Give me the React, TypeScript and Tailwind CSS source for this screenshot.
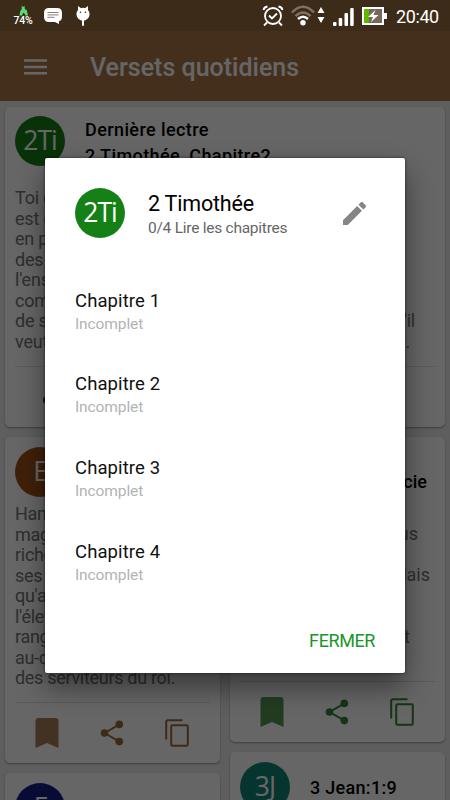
import type { ReactNode } from "react";

interface CardActionsProps {
  bookmark: string;
  share: string;
}

const chapters = ["Chapitre 1", "Chapitre 2", "Chapitre 3", "Chapitre 4"];

const timothyLines = [
  ["Toi donc, mon enfant, fortifie-toi dans la", ""],
  ["est en Jésus-Christ. Et ce que tu as", ""],
  ["en présence de beaucoup de témoins,", ""],
  ["des hommes fidèles, capables de", ""],
  ["l'enseigner aussi à d'autres. Souffre", ""],
  ["comme un bon soldat de Jésus-Christ.", ""],
  ["de soldat qui s'embarrasse des", "s'il"],
  ["veut plaire à celui qui l'a", "enrôlé."],
];

const estherLines = [
  "Haman leur parla de la",
  "magnificence de ses",
  "richesses, du nombre",
  "ses fils, de tout ce",
  "qu'avait fait le roi pour",
  "l'élever en lui donnant",
  "rang",
  "au-dessus des chefs et",
  "des serviteurs du roi.",
];

function Avatar({ label, color }: { label: string; color: string }) {
  return (
    <div
      className={`flex size-[50px] shrink-0 items-center justify-center rounded-full pb-[2px] font-['Open_Sans'] text-[26.5px] leading-none tracking-[-1px] text-white ${color}`}
    >
      {label}
    </div>
  );
}

function ShareIcon({ className }: { className?: string }) {
  return (
    <svg viewBox="0 0 24 26" className={`h-[26px] w-6 ${className ?? ""}`} fill="currentColor">
      <path d="M4.5 13 19.5 4.3M4.5 13l15 8.7" stroke="currentColor" strokeWidth="2" />
      <circle cx="4.5" cy="13" r="3.8" />
      <circle cx="19.3" cy="4.4" r="3.8" />
      <circle cx="19.3" cy="21.6" r="3.8" />
    </svg>
  );
}

function CardActions({ bookmark, share }: CardActionsProps) {
  return (
    <div className="mx-[10px] flex h-[61px] items-start border-t border-[#e2e2e2] pt-[15px]">
      <svg viewBox="0 0 24 30" className={`ml-5 h-[30px] w-6 ${bookmark}`} fill="currentColor">
        <path d="M3.500 0h17q3 0 3 3v27l-11.500-5-11.500 5V3q0-3 3-3z" />
      </svg>
      <ShareIcon className={`mt-[2px] ml-[41px] ${share}`} />
      <svg viewBox="0 0 24 28" className={`mt-[1px] ml-[41px] h-7 w-6 ${share}`} fill="none" stroke="currentColor" strokeWidth="2">
        <path d="M17.5 1.3H3Q1.2 1.3 1.2 3v17.5" />
        <rect x="6.2" y="6.3" width="16.6" height="20.5" rx="1.3" />
      </svg>
    </div>
  );
}

function Card({ className, children }: { className: string; children: ReactNode }) {
  return (
    <div className={`flex flex-col rounded-[5px] bg-white shadow-[0_1px_2px_rgba(0,0,0,0.35)] ${className}`}>
      {children}
    </div>
  );
}

function StatusBar() {
  return (
    <div className="absolute inset-x-0 top-0 flex h-[31px] text-white">
      {/* Battery percentage */}
      <div className="ml-[12px] flex w-[22px] flex-col items-center pt-[5px]">
        <svg viewBox="0 0 10 11" className="h-[11px] w-[9px]" fill="#55df72">
          <path d="M3 0l1.500 2 1.500-2 .5 4 2 1 1.500 6H7L6 8.500 4.500 8l-1 3H.5l1-5 1.500-2z" />
        </svg>
        <span className="text-[10.5px] leading-[9px] font-medium tracking-[-0.2px]">74%</span>
      </div>
      <svg viewBox="0 0 18 16" className="mt-2 ml-[10px] h-4 w-[18px]" fill="currentColor">
        <path d="M5 0h8q5 0 5 5v3q0 5-3 5v3l-4-2H5q-5 0-5-5V5q0-5 5-5z" />
        <path d="M3.500 4.500h11M3.500 6.900h11M3.500 9.300h7" stroke="#8b7d72" />
      </svg>
      <svg viewBox="0 0 14 20" className="mt-[6px] ml-[14px] h-5 w-[14px]" fill="currentColor">
        <circle cx="7" cy="8.200" r="6.500" />
        <path d="M2 0 5.500 2.500 2 5zM12 0 8.500 2.500 12 5z" />
        <path d="M7 14v5" stroke="currentColor" strokeWidth="2" strokeLinecap="round" />
        <circle cx="4.500" cy="6.300" r=".8" fill="#3d2b1b" />
        <circle cx="9.500" cy="6.300" r=".8" fill="#3d2b1b" />
      </svg>
      {/* Alarm */}
      <svg viewBox="0 0 22 22" className="mt-[5px] ml-[172px] h-[22px] w-[22px]" fill="none" stroke="currentColor" strokeWidth="1.8">
        <circle cx="11" cy="11" r="8" />
        <path d="M1.500 5q.5-3 4-3.500M20.500 5q-.5-3-4-3.500M5 17.500 2 20.500M17 17.500l3 3M7 10.500l3 3 5-5" />
      </svg>
      <svg viewBox="0 0 24 22" className="mt-[5px] ml-[7px] h-[22px] w-6" fill="none" strokeWidth="2.4">
        <path d="M1 7.500Q12-4 23 7.500M4.500 11.200q7.500-7.500 15 0" stroke="#807062" />
        <path d="M7 14q5-4.500 10 0" stroke="white" />
        <circle cx="12" cy="17.800" r="2.700" fill="white" />
      </svg>
      <svg viewBox="0 0 8 16" className="mt-[7px] ml-[2px] h-4 w-2" fill="currentColor">
        <path d="M4 0l3.500 6h-7zM4 16l3.500-6h-7z" />
      </svg>
      <svg viewBox="0 0 21 18" className="mt-2 ml-2 h-[18px] w-[21px]" fill="currentColor">
        <rect x="0" y="14" width="3.5" height="4" rx="1" />
        <rect x="5.7" y="10" width="3.5" height="8" rx="1" />
        <rect x="11.5" y="5" width="3.5" height="13" rx="1" />
        <rect x="17.2" y="0" width="3.5" height="18" rx="1" />
      </svg>
      <svg viewBox="0 0 25 18" className="mt-[7px] ml-[8px] h-[18px] w-[25px]">
        <path d="M1 1h20v16H1z" fill="#75695f" stroke="white" strokeWidth="2" />
        <path d="M2 2h5v14H2z" fill="#5cb800" />
        <path d="M22 6h3v6h-3z" fill="white" />
        <path d="M13.500 3 6 10h5l-2 5 7.500-7h-5z" fill="white" />
      </svg>
      <span className="mt-[5px] ml-[9px] text-[18px] leading-[23px] tracking-[-0.4px]">20:40</span>
    </div>
  );
}

export default function App() {
  return (
    <div className="relative h-[800px] w-[450px] overflow-hidden bg-[#ebebeb] font-[Roboto,sans-serif]">
      <div className="h-[31px] bg-[#996c42]" />
      <header className="flex h-[70px] items-center bg-[#ab7748] text-white">
        <svg viewBox="0 0 23 16" className="mt-[2px] ml-[23.5px] h-4 w-[23px]" stroke="currentColor" strokeWidth="2.4">
          <path d="M0 1.500h23M0 8h23M0 14.200h23" />
        </svg>
        <h1 className="mt-[4px] ml-[43.5px] text-[25px] font-medium">Versets quotidiens</h1>
      </header>

      <main className="px-[5px] pt-[6px]">
        <Card className="h-[320px]">
          <div className="flex h-[80px] pt-[9px] pl-[10px]">
            <Avatar label="2Ti" color="bg-[#158015]" />
            <div className="mt-[1px] ml-5 text-[18px] leading-[26px] font-medium tracking-[0.4px] text-black">
              <p>Dernière lectre</p>
              <p>2 Timothée, Chapitre2</p>
            </div>
          </div>
          <div className="mt-px ml-[10px] w-[400px] text-[18px] leading-[20.5px] tracking-[-0.2px] text-[#757575]">
            {timothyLines.map(([start, end]) => (
              <div key={start} className="flex justify-between whitespace-nowrap last:pr-[5px]">
                <span>{start}</span>
                <span>{end}</span>
              </div>
            ))}
          </div>
          <div className="mx-[10px] mt-[14px] border-t border-[#e2e2e2] pt-[20px]">
            <ShareIcon className="ml-[26.5px] text-[#158015]" />
          </div>
        </Card>

        <div className="mt-[10px] flex items-start gap-[10px]">
          <div className="flex w-[215px] flex-col gap-[10px]">
            <Card className="h-[326px]">
              <div className="h-[67px] pt-[10px] pl-[10px]">
                <Avatar label="E" color="bg-[#a0521a]" />
              </div>
              <div className="ml-[10px] h-[198px] text-[18px] leading-[20.5px] tracking-[-0.3px] whitespace-nowrap text-[#757575]">
                {estherLines.map((line) => (
                  <p key={line}>{line}</p>
                ))}
              </div>
              <CardActions bookmark="text-[#a87d58]" share="text-[#9f673a]" />
            </Card>
            <Card className="h-[100px] pt-[10px] pl-[10px]">
              <Avatar label="F" color="bg-[#141e83]" />
            </Card>
          </div>

          <div className="flex w-[215px] flex-col gap-[10px]">
            <Card className="h-[305px]">
              <p className="mt-[34px] mr-[18px] text-right text-[18px] leading-[22px] font-medium text-black">Lucie</p>
              <div className="mt-[31px] ml-[10px] h-[157px] text-right text-[18px] leading-[20.5px] text-[#757575]">
                <p className="mr-[27px]">vous</p>
                <p className="mt-[20.5px] mr-[15px]">palais</p>
                <p className="mt-[41px] mr-[35px]">et</p>
              </div>
              <CardActions bookmark="text-[#559655]" share="text-[#3a823a]" />
            </Card>
            <Card className="h-[100px] pt-[10px] pl-[10px]">
              <div className="flex">
                <Avatar label="3J" color="bg-[#108579]" />
                <p className="mt-[15px] ml-5 text-[18px] leading-[22px] font-medium tracking-[0.3px] text-black">3 Jean:1:9</p>
              </div>
            </Card>
          </div>
        </div>
      </main>

      {/* Backdrop */}
      <div className="absolute inset-0 bg-black/60" />
      <StatusBar />

      {/* Chapter dialog */}
      <section className="absolute top-[158px] left-[45px] flex h-[515px] w-[360px] flex-col rounded-[2px] bg-white shadow-[0_14px_28px_rgba(0,0,0,0.45),0_0_3px_rgba(0,0,0,0.6)]">
        <div className="flex h-[120px] pt-[30px] pl-[30px]">
          <Avatar label="2Ti" color="bg-[#158015]" />
          <div className="ml-[23px] w-[195px]">
            <h2 className="mt-[2px] text-[21.5px] leading-7 tracking-[-0.2px] text-black">2 Timothée</h2>
            <p className="-mt-px text-[15.5px] leading-[22px] tracking-[-0.25px] text-[#666]">0/4 Lire les chapitres</p>
          </div>
          <svg viewBox="3 3 18 18" className="mt-[14px] size-[23px]" fill="#858585">
            <path d="M3 17.250V21h3.750L17.810 9.940l-3.750-3.750L3 17.250zM20.710 7.040c.39-.39.39-1.020 0-1.410l-2.340-2.340c-.39-.39-1.020-.39-1.410 0l-1.830 1.830 3.750 3.750 1.830-1.830z" />
          </svg>
        </div>
        <div className="pl-[30px]">
          {chapters.map((chapter) => (
            <div key={chapter} className="h-[83.8px] pt-[10.6px]">
              <p className="text-[18.5px] leading-6 tracking-[0.1px] text-[#111]">{chapter}</p>
              <p className="text-[15.5px] leading-[22px] tracking-[-0.1px] text-[#b3b3b3]">Incomplet</p>
            </div>
          ))}
        </div>
        <button className="mt-auto mr-[30px] mb-5 self-end text-[18px] leading-6 tracking-[-0.4px] text-[#20942a]">FERMER</button>
      </section>
    </div>
  );
}
